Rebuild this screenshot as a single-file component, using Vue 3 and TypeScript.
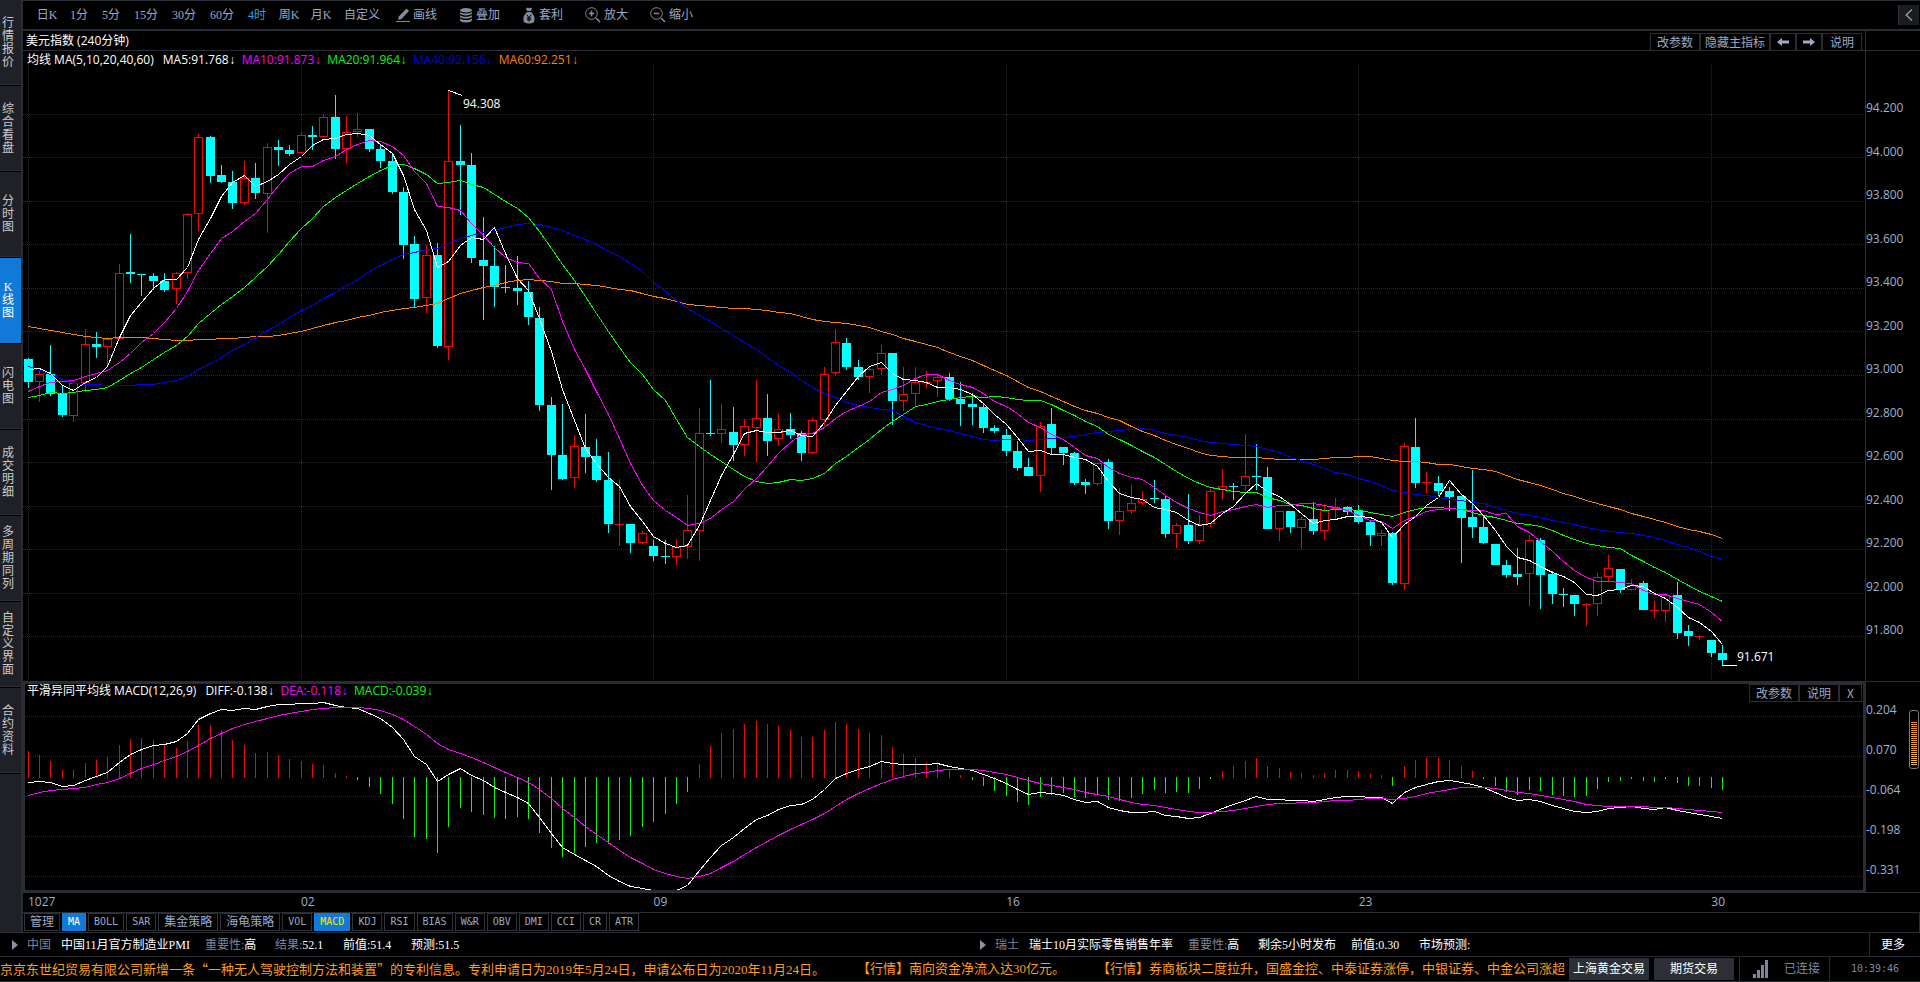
<script setup lang="ts">
type Candle = [kind: 0 | 1, high: number, top: number, bottom: number, low: number]
interface Point { x: number; y: number }

const sideTabs = ['行情报价', '综合看盘', '分时图', 'K线图', '闪电图', '成交明细', '多周期同列', '自定义界面', '合约资料']
const activeSide = 'K线图'

const periods = ['日K', '1分', '5分', '15分', '30分', '60分', '4时', '周K', '月K', '自定义']
const activePeriod = '4时'

const averages = [
  { label: 'MA5:91.768', tone: 'white' },
  { label: 'MA10:91.873', tone: 'magenta' },
  { label: 'MA20:91.964', tone: 'green' },
  { label: 'MA40:92.156', tone: 'blue' },
  { label: 'MA60:92.251', tone: 'orange' },
]

const priceLabels = ['94.200', '94.000', '93.800', '93.600', '93.400', '93.200', '93.000', '92.800', '92.600', '92.400', '92.200', '92.000', '91.800']
const macdLabels = ['0.204', '0.070', '-0.064', '-0.198', '-0.331']

const dates = [
  { label: '1027', bars: 24 },
  { label: '02', bars: 31 },
  { label: '09', bars: 31 },
  { label: '16', bars: 31 },
  { label: '23', bars: 31 },
  { label: '30', bars: 18 },
]

const indicators = ['管理', 'MA', 'BOLL', 'SAR', '集金策略', '海龟策略', 'VOL', 'MACD', 'KDJ', 'RSI', 'BIAS', 'W&R', 'OBV', 'DMI', 'CCI', 'CR', 'ATR']

// Each candle: rising flag, then high, body top, body bottom and low on the plot's vertical scale.
const candles: Candle[] = [
  [0, 358, 359, 382, 388], [1, 371, 374, 382, 402], [0, 345, 374, 394, 396], [0, 386, 393, 415, 417], [1, 382, 383, 416, 422],
  [1, 329, 344, 383, 392], [0, 332, 344, 347, 358], [1, 337, 339, 347, 366], [1, 264, 273, 339, 339], [0, 234, 272, 274, 283],
  [0, 274, 274, 275, 296], [0, 273, 276, 281, 290], [0, 273, 281, 290, 292], [1, 272, 273, 289, 304], [1, 213, 214, 273, 279],
  [1, 134, 137, 214, 231], [0, 136, 137, 176, 183], [0, 165, 175, 182, 183], [0, 171, 182, 203, 209], [1, 161, 178, 203, 205],
  [0, 163, 178, 193, 199], [1, 143, 147, 194, 233], [0, 140, 147, 150, 166], [0, 145, 150, 154, 156], [1, 132, 135, 153, 154],
  [0, 126, 135, 137, 150], [1, 114, 117, 137, 137], [0, 95, 117, 149, 159], [1, 116, 132, 149, 163], [1, 113, 129, 132, 137],
  [0, 129, 129, 149, 152], [0, 145, 149, 161, 168], [0, 155, 161, 192, 194], [0, 187, 192, 245, 259], [0, 236, 244, 299, 307],
  [1, 245, 255, 298, 313], [0, 243, 255, 346, 348], [1, 90, 161, 347, 360], [0, 125, 161, 165, 215], [0, 153, 165, 258, 263],
  [0, 217, 260, 266, 320], [0, 246, 266, 287, 307], [0, 265, 287, 288, 293], [0, 256, 288, 291, 305], [0, 281, 292, 317, 325],
  [0, 307, 318, 405, 411], [0, 397, 405, 455, 490], [0, 404, 455, 479, 480], [1, 435, 446, 478, 488], [0, 414, 447, 457, 473],
  [0, 439, 456, 480, 482], [0, 452, 480, 524, 533], [1, 479, 524, 525, 546], [0, 524, 524, 543, 553], [1, 531, 533, 543, 544],
  [0, 540, 546, 556, 561], [0, 540, 556, 557, 564], [1, 539, 547, 557, 565], [1, 495, 530, 547, 559], [1, 408, 433, 531, 561],
  [0, 380, 433, 434, 436], [1, 404, 429, 434, 443], [0, 407, 432, 445, 461], [1, 419, 426, 445, 456], [1, 380, 418, 428, 462],
  [0, 394, 418, 441, 456], [1, 414, 429, 439, 446], [0, 413, 429, 435, 439], [0, 431, 433, 453, 461], [1, 418, 420, 453, 454],
  [1, 367, 374, 420, 426], [1, 329, 342, 373, 375], [0, 338, 343, 367, 370], [0, 360, 367, 377, 380], [1, 367, 369, 377, 393],
  [1, 345, 353, 369, 375], [0, 353, 353, 401, 425], [1, 367, 394, 401, 411], [1, 367, 382, 394, 406], [1, 371, 382, 383, 388],
  [1, 374, 377, 381, 397], [0, 373, 377, 399, 401], [0, 382, 399, 404, 426], [0, 393, 404, 407, 425], [0, 403, 407, 428, 433],
  [0, 425, 428, 431, 433], [0, 429, 435, 451, 456], [0, 441, 451, 468, 471], [0, 458, 467, 476, 476], [1, 422, 426, 476, 492],
  [0, 408, 424, 448, 454], [0, 447, 447, 453, 465], [0, 452, 453, 483, 485], [0, 479, 482, 485, 494], [1, 462, 463, 484, 486],
  [0, 459, 462, 521, 529], [1, 488, 511, 521, 535], [1, 485, 503, 511, 514], [1, 491, 499, 503, 505], [0, 480, 498, 499, 503],
  [0, 496, 499, 534, 538], [1, 523, 525, 534, 548], [0, 494, 525, 541, 544], [1, 515, 524, 541, 544], [1, 489, 491, 524, 527],
  [1, 469, 486, 490, 500], [0, 483, 486, 487, 500], [1, 434, 476, 486, 491], [0, 444, 476, 477, 490], [0, 467, 477, 529, 529],
  [1, 511, 511, 529, 541], [0, 511, 511, 527, 533], [1, 517, 519, 528, 549], [0, 502, 519, 531, 535], [1, 504, 510, 531, 539],
  [1, 498, 507, 509, 519], [0, 506, 507, 512, 515], [0, 505, 510, 522, 524], [0, 520, 522, 535, 546], [1, 530, 533, 536, 546],
  [0, 532, 533, 583, 585], [1, 443, 446, 584, 590], [0, 418, 447, 483, 488], [1, 472, 482, 483, 493], [0, 476, 483, 491, 496],
  [0, 487, 491, 497, 511], [0, 496, 496, 518, 563], [0, 470, 517, 527, 538], [0, 516, 527, 543, 544], [0, 544, 544, 565, 565],
  [0, 560, 565, 575, 578], [0, 548, 574, 577, 585], [1, 535, 540, 574, 606], [0, 538, 540, 575, 609], [0, 571, 574, 594, 604],
  [0, 588, 594, 595, 607], [0, 595, 595, 604, 616], [1, 603, 604, 605, 626], [1, 573, 577, 604, 616], [1, 555, 568, 577, 582],
  [0, 569, 569, 590, 593], [1, 579, 585, 590, 591], [0, 581, 583, 610, 610], [1, 601, 610, 611, 618], [1, 593, 595, 611, 622],
  [0, 582, 595, 633, 639], [0, 625, 631, 636, 646], [1, 635, 636, 637, 640], [0, 640, 640, 653, 657], [0, 645, 653, 660, 665],
]

const barX = (i: number): number => Math.floor(28.2 + 11.372 * i)
const closes = candles.map(([up, , top, bottom]) => (up ? top : bottom))

const bars = candles.map(([up, high, top, bottom, low], i) => ({
  up: up === 1, x: barX(i), high, top, bottom, low, height: bottom - top,
}))

// Averages for bars whose window starts before the visible range.
const lead5 = [369, 368, 373, 385]
const lead10 = [391, 386, 382, 381, 380, 376, 373, 370, 362]
const lead20 = [397, 395, 392, 393, 392, 390, 389, 387, 380, 373, 367, 359, 352, 345, 336, 323, 313, 304, 296]
const lead40 = [366, 370, 374, 379, 383, 384, 384, 385, 385, 385, 384, 384, 382, 380, 376, 369, 363, 357, 350, 344, 337, 330, 324, 317, 310, 305, 298, 292, 285, 279, 271, 265, 259, 254, 252, 249, 248, 243, 238]
const lead60 = [326, 328, 330, 332, 334, 336, 337, 338, 337, 337, 337, 338, 339, 340, 340, 339, 339, 338, 338, 337, 336, 336, 335, 333, 331, 328, 325, 322, 320, 317, 315, 312, 310, 308, 307, 305, 303, 298, 293, 290, 287, 285, 282, 280, 279, 280, 281, 283, 283, 284, 285, 287, 289, 290, 293, 296, 298, 301, 304]

function movingAverage(size: number, lead: number[]): number[] {
  return closes.map((_, i) => {
    if (i < lead.length) return lead[i]
    const slice = closes.slice(i - size + 1, i + 1)
    return slice.reduce((sum, value) => sum + value, 0) / size
  })
}

function toPoints(values: number[]): string {
  return values
    .map((value, i): Point => ({ x: barX(i) + 0.5, y: Math.round(value) + 0.5 }))
    .map(({ x, y }) => `${x},${y}`)
    .join(' ')
}

const maLines = [
  { tone: 'orange', points: toPoints(movingAverage(60, lead60)) },
  { tone: 'blue', points: toPoints(movingAverage(40, lead40)) },
  { tone: 'green', points: toPoints(movingAverage(20, lead20)) },
  { tone: 'magenta', points: toPoints(movingAverage(10, lead10)) },
  { tone: 'white', points: toPoints(movingAverage(5, lead5)) },
]

// MACD(12,26,9) over the closes, scaled to the lower plot.
const zeroY = 777
const macdScale = 1.375
let fast = 379.6
let slow = 376
let signal = 13
const diffs: number[] = []
const deas: number[] = []
closes.forEach((close, i) => {
  if (i > 0) {
    fast = (fast * 11 + close * 2) / 13
    slow = (slow * 25 + close * 2) / 27
    signal = signal * 0.8 + (fast - slow) * 0.2
  }
  diffs.push(zeroY + (fast - slow) * macdScale)
  deas.push(zeroY + signal * macdScale)
})
const diffPoints = toPoints(diffs)
const deaPoints = toPoints(deas)
const histogram = diffs.map((diff, i) => {
  const size = Math.round((diff - deas[i]) * 2)
  return { x: barX(i), y: size < 0 ? zeroY + size : zeroY, height: Math.abs(size) + 1, up: size < 0 }
})

const priceGrid = [114, 157, 201, 244, 288, 331, 375, 419, 462, 506, 549, 593, 636]
const macdGrid = [716, 756, 796, 836, 876]
const dayGrid = [0, 24, 55, 86, 117, 148].map(barX)

const news = [
  { place: '中国', title: '中国11月官方制造业PMI', facts: [{ name: '结果:', value: '52.1', dim: true }, { name: '前值:', value: '51.4' }, { name: '预测:', value: '51.5' }] },
  { place: '瑞士', title: '瑞士10月实际零售销售年率', facts: [{ name: '剩余5小时发布', value: '', wide: true }, { name: '前值:', value: '0.30' }, { name: '市场预测:', value: '' }] },
]
</script>

<template>
  <div class="app">
    <div class="workspace">
      <nav class="sidebar">
        <button v-for="tab in sideTabs" :key="tab" type="button" class="side-tab" :class="{ active: tab === activeSide }">
          <span>{{ tab }}</span>
        </button>
      </nav>

      <main class="desk">
        <header class="toolbar">
          <div class="periods">
            <button v-for="p in periods" :key="p" type="button" class="period" :class="{ active: p === activePeriod, mid: /^\d\d/.test(p), wide: p === '自定义' }">{{ p }}</button>
          </div>
          <div class="tools">
            <button type="button" class="tool">
              <svg width="14" height="15" viewBox="0 0 14 15"><path d="M10.5 0.5 13 3 5.5 11 2 12 3 8.2z" fill="currentColor" /><path d="M0 13.5H14" stroke="currentColor" /></svg>
              画线
            </button>
            <button type="button" class="tool">
              <svg width="14" height="15" viewBox="0 0 14 15" fill="currentColor">
                <ellipse cx="7" cy="2.3" rx="6" ry="2.2" />
                <path d="M1 3.8C2 6.2 12 6.2 13 3.8V5.6C12 8 2 8 1 5.6zM1 7C2 9.4 12 9.4 13 7V8.8C12 11.2 2 11.2 1 8.8zM1 10.2C2 12.6 12 12.6 13 10.2V12.2C12 15.2 2 15.2 1 12.2z" />
              </svg>
              叠加
            </button>
            <button type="button" class="tool">
              <svg width="14" height="17" viewBox="0 0 14 17">
                <path d="M4 1.2 6 .6 7 1.6 8.2.4 10 1.6 9 4H5zM5 5H9C11.5 7 13 10 12.6 13 12.3 15.6 10.5 16.5 7 16.5S1.7 15.6 1.4 13C1 10 2.5 7 5 5z" fill="currentColor" />
                <path d="M4.6 7.6 7 10.6 9.4 7.6M7 10.6V14.6M4.8 11H9.2M4.8 12.8H9.2" fill="none" stroke="#000" />
              </svg>
              套利
            </button>
            <button type="button" class="tool">
              <svg width="16" height="16" viewBox="0 0 16 16" fill="none" stroke="currentColor"><circle cx="6.5" cy="6.5" r="5.8" /><path d="M3.8 6.5H9.2M6.5 3.8V9.2M11 11l4 4" stroke-width="1.6" /></svg>
              放大
            </button>
            <button type="button" class="tool">
              <svg width="16" height="16" viewBox="0 0 16 16" fill="none" stroke="currentColor"><circle cx="6.5" cy="6.5" r="5.8" /><path d="M3.8 6.5H9.2M11 11l4 4" stroke-width="1.6" /></svg>
              缩小
            </button>
          </div>
          <button type="button" class="collapse" aria-label="收起">
            <svg width="8" height="12" viewBox="0 0 8 12" fill="none" stroke="currentColor" stroke-width="1.4"><path d="M7 .5 1.2 6 7 11.5" /></svg>
          </button>
        </header>

        <div class="title-row">
          <h1 class="title">美元指数 (240分钟)</h1>
          <div class="actions">
            <button type="button">改参数</button>
            <button type="button" class="snug">隐藏主指标</button>
            <button type="button" class="arrow" aria-label="左移"><svg width="12" height="8" viewBox="0 0 12 8" fill="currentColor"><path d="M0 4 5 0V2.5H12V5.5H5V8z" /></svg></button>
            <button type="button" class="arrow" aria-label="右移"><svg width="12" height="8" viewBox="0 0 12 8" fill="currentColor"><path d="M12 4 7 0V2.5H0V5.5H7V8z" /></svg></button>
            <button type="button" class="roomy">说明</button>
          </div>
          <div class="axis-head"></div>
        </div>

        <section class="price">
          <div class="price-plot">
            <div class="legend">
              <span class="name">均线 MA(5,10,20,40,60)</span>
              <span v-for="a in averages" :key="a.label" :class="a.tone">{{ a.label }}<i>↓</i></span>
            </div>
            <svg class="plot" viewBox="23 65 1842 616" preserveAspectRatio="none">
              <g class="grid">
                <line v-for="y in priceGrid" :key="'h' + y" x1="23" x2="1865" :y1="y + 0.5" :y2="y + 0.5" />
                <line v-for="x in dayGrid" :key="'v' + x" :x1="x + 0.5" :x2="x + 0.5" y1="65" y2="681" />
              </g>
              <g v-for="b in bars" :key="b.x" :class="b.up ? 'rise' : 'fall'">
                <rect class="wick" :x="b.x" :y="b.high" width="1" :height="b.low - b.high" />
                <rect v-if="b.up && b.height > 1" class="hollow" :x="b.x - 3.5" :y="b.top + 0.5" width="8" :height="b.height - 1" />
                <rect v-else class="wick" :x="b.x - 4" :y="b.top" width="9" :height="b.height" />
              </g>
              <polyline v-for="l in maLines" :key="l.tone" class="line" :class="l.tone" :points="l.points" />
              <path class="line white" d="M448.5 90.5 462.5 95.5M1722 665.5H1737" />
              <text x="463" y="108">94.308</text>
              <text x="1737" y="661">91.671</text>
            </svg>
          </div>
          <div class="axis price-axis"><span v-for="p in priceLabels" :key="p">{{ p }}</span></div>
        </section>

        <section class="macd">
          <div class="macd-plot">
            <div class="legend">
              <span class="name">平滑异同平均线 MACD(12,26,9)</span>
              <span class="white">DIFF:-0.138<i>↓</i></span>
              <span class="magenta">DEA:-0.118<i>↓</i></span>
              <span class="green">MACD:-0.039<i>↓</i></span>
              <div class="actions">
                <button type="button">改参数</button>
                <button type="button" class="roomy">说明</button>
                <button type="button" class="close">X</button>
              </div>
            </div>
            <svg class="plot" viewBox="25 700 1838 190" preserveAspectRatio="none">
              <g class="grid"><line v-for="y in macdGrid" :key="y" x1="25" x2="1863" :y1="y + 0.5" :y2="y + 0.5" /></g>
              <rect v-for="h in histogram" :key="h.x" :class="h.up ? 'bar-up' : 'bar-down'" :x="h.x" :y="h.y" width="1" :height="h.height" />
              <polyline class="line white" :points="diffPoints" />
              <polyline class="line magenta" :points="deaPoints" />
            </svg>
          </div>
          <div class="axis macd-axis">
            <span v-for="m in macdLabels" :key="m">{{ m }}</span>
            <div class="gauge"></div>
          </div>
        </section>

        <div class="dates"><span v-for="d in dates" :key="d.label" :style="{ flexGrow: d.bars }">{{ d.label }}</span></div>

        <div class="indicators">
          <button v-for="n in indicators" :key="n" type="button" :class="{ latin: /^[A-Z]/.test(n), on: n === 'MA', sub: n === 'MACD' }">{{ n }}</button>
        </div>
      </main>
    </div>

    <div class="news">
      <div v-for="n in news" :key="n.place" class="news-item">
        <svg width="6" height="10" viewBox="0 0 6 10"><path d="M0 0 6 5 0 10z" fill="#8a92a8" /></svg>
        <span class="place">{{ n.place }}</span>
        <a href="#" class="headline">{{ n.title }}</a>
        <span class="fact weight"><em>重要性:</em>高</span>
        <span v-for="f in n.facts" :key="f.name" class="fact" :class="{ wide: f.wide }"><em v-if="f.dim">{{ f.name }}</em><template v-else>{{ f.name }}</template>{{ f.value }}</span>
      </div>
      <a href="#" class="more">更多</a>
    </div>

    <footer class="status">
      <div class="ticker">
        <div class="track">
          <span>京京东世纪贸易有限公司新增一条<b>“</b>一种无人驾驶控制方法和装置<b>”</b>的专利信息。专利申请日为2019年5月24日，申请公布日为2020年11月24日。</span>
          <span>【行情】南向资金净流入达30亿元。</span>
          <span>【行情】券商板块二度拉升，国盛金控、中泰证券涨停，中银证券、中金公司涨超</span>
        </div>
      </div>
      <button type="button" class="trade">上海黄金交易</button>
      <button type="button" class="trade">期货交易</button>
      <div class="link">
        <svg width="16" height="18" viewBox="0 0 16 18" fill="#7c869c"><path d="M0 14h3v4H0zM4 10h3v8H4zM8 5h3v13H8zM12 0h3v18h-3z" /></svg>
        已连接
      </div>
      <time class="clock">10:39:46</time>
    </footer>
  </div>
</template>

<style>
body { background: #000; }
</style>

<style scoped>
* { box-sizing: border-box; }
.app {
  --edge: #2a2e34;
  --text: #9aa9c6;
  --song: "Liberation Serif", "Noto Sans CJK SC", serif;
  --ui: "Open Sans", "Liberation Sans", "Noto Sans CJK SC", sans-serif;
  display: flex;
  flex-direction: column;
  min-height: 100vh;
  background: #000;
  color: var(--text);
  font: 12px/16px var(--song);
  white-space: nowrap;
  overflow: hidden;
}
button { margin: 0; padding: 0; border: 0; background: none; color: inherit; font: inherit; white-space: nowrap; }
a { color: inherit; text-decoration: none; }
svg { display: block; flex: none; }

.workspace { flex: 1; display: flex; min-height: 0; }
.sidebar { flex: none; width: 23px; display: flex; flex-direction: column; background: #202126; border-right: 2px solid var(--edge); }
.side-tab { flex: none; height: 86px; padding-left: 2px; border-bottom: 1px solid #000; box-shadow: inset 0 -1px #2c2e34; display: flex; align-items: center; color: #c9cbd0; }
.side-tab span { width: 12px; white-space: normal; word-break: break-all; line-height: 13px; text-align: center; }
.side-tab.active { background: #117ad8; color: #fff; box-shadow: none; }

.desk { flex: 1; min-width: 0; display: flex; flex-direction: column; }
.toolbar { height: 31px; border-top: 1px solid var(--edge); border-bottom: 2px solid var(--edge); display: flex; align-items: center; padding: 0 1px 0 15px; }
.periods { display: flex; gap: 14px; }
.period { width: 18px; display: flex; justify-content: center; }
.period.mid { width: 24px; }
.period.wide { width: 36px; }
.period.active { color: #1fa2f2; }
.tools { display: flex; gap: 22px; margin-left: 16px; }
.tool { display: flex; align-items: center; gap: 3px; }
.tool svg { color: #858b9b; }
.collapse { margin-left: auto; width: 21px; height: 20px; display: flex; align-items: center; justify-content: center; background: #1b1c20; border-left: 1px solid #33373d; color: #8f9ab0; }

.title-row { height: 20px; display: flex; border-bottom: 1px solid var(--edge); }
.title { flex: 1; margin: 0; padding-left: 3px; font: 12px/20px var(--ui); color: #fff; }
.actions { display: flex; height: 18px; font-family: "Noto Sans CJK SC", sans-serif; color: var(--text); }
.actions button { border: 1px solid var(--edge); padding: 0 6px; line-height: 16px; display: flex; align-items: center; justify-content: center; }
.actions .snug { padding: 0 4px; }
.actions .roomy { padding: 0 7px; }
.actions .arrow { width: 26px; padding: 0; }
.actions .close { width: 23px; padding: 0; }
.title-row .actions { margin: 2px 3px 0 0; }
.axis-head { width: 55px; border-left: 1px solid var(--edge); }

.price { flex: 1 1 630px; display: flex; min-height: 0; }
.price-plot { flex: 1; min-width: 0; display: flex; flex-direction: column; }
.legend { height: 14px; padding-left: 4px; display: flex; gap: 6px; font: 12px/18px var(--ui); color: #fff; }
.legend .name { margin-right: 3px; }
.legend i { display: inline-block; width: 7px; text-align: center; font-style: normal; }
.legend .white { color: #fff; }
.legend .magenta { color: #f0f; }
.legend .green { color: #0f0; }
.legend .blue { color: #0000e0; }
.legend .orange { color: #ff8000; }
.plot { flex: 1 1 0; min-height: 0; width: 100%; shape-rendering: crispEdges; }
.plot text { fill: #fff; font: 12px var(--ui); }
.grid line { stroke: #2a2a2e; stroke-dasharray: 1 1; }
.rise .wick { fill: #f00; }
.fall .wick { fill: #0ff; }
.hollow { fill: #000; stroke: #f00; }
.line { fill: none; stroke-width: 1; }
.line.white { stroke: #fff; }
.line.magenta { stroke: #f0f; }
.line.green { stroke: #0f0; }
.line.blue { stroke: #00f; }
.line.orange { stroke: #ff8000; }
.bar-up { fill: #f00; }
.bar-down { fill: #0f0; }

.axis { position: relative; flex: none; display: flex; flex-direction: column; justify-content: space-between; font: 12px/16px var(--ui); color: #9db1d0; }
.price-axis { width: 55px; border-left: 1px solid var(--edge); padding: 49px 0 43px; }
.macd { flex: none; height: 212px; display: flex; margin-left: -1px; }
.macd-plot { flex: 1; min-width: 0; border: 3px solid var(--edge); display: flex; flex-direction: column; }
.macd-plot .legend { height: 16px; padding-left: 2px; line-height: 14px; }
.macd-plot .actions { margin: 0 1px 0 auto; font-size: 12px; }
.macd-axis { width: 54px; border-top: 1px solid var(--edge); border-bottom: 1px solid var(--edge); padding: 20px 0 14px; }
.gauge { position: absolute; top: 28px; right: 1px; width: 10px; height: 59px; border: 1px solid #7a7a7a; border-radius: 3px; }
.gauge::after { content: ""; position: absolute; inset: 10px 1px 2px; background: repeating-linear-gradient(#000 0 1px, transparent 1px 2px), linear-gradient(#f58a1c, #f9bd3c); }

.dates { height: 20px; border-bottom: 1px solid var(--edge); padding: 0 4px 0 5px; display: flex; font: 12px/18px var(--ui); color: #9db1d0; }
.dates span { flex: 0 1 0; width: 0; }
.indicators { height: 19px; padding-left: 1px; display: flex; gap: 2px; border-right: 1px solid var(--edge); }
.indicators button { height: 18px; padding: 0 5px; border: 1px solid #30343a; line-height: 16px; }
.indicators .latin { font-family: "DejaVu Sans Mono", monospace; font-size: 10px; }
.indicators .on { background: #117ad8; border-color: #117ad8; color: #fff; }
.indicators .sub { background: #117ad8; border-color: #117ad8; color: #ffe600; }

.news { height: 24px; border-top: 1px solid var(--edge); display: grid; grid-template-columns: 968fr 901fr 51px; align-items: center; color: #fff; }
.news-item { display: flex; align-items: center; padding-left: 12px; }
.place { margin-left: 9px; width: 34px; color: #7b849c; }
.headline { margin-right: 15px; }
.fact { width: 68px; }
.fact.weight { width: 70px; }
.fact.wide { width: 93px; }
.fact em { font-style: normal; color: #7b849c; }
.more { align-self: stretch; border-left: 1px solid var(--edge); padding-left: 11px; line-height: 24px; }

.status { height: 26px; border-top: 1px solid var(--edge); border-bottom: 1px solid var(--edge); display: flex; align-items: center; }
.ticker { flex: 1; min-width: 0; overflow: hidden; color: #ff9c1a; font-size: 13px; line-height: 22px; }
.track { display: flex; gap: 32px; }
.ticker b { font-weight: normal; font-family: "Noto Sans CJK SC", sans-serif; }
.trade { width: 80px; height: 22px; margin-right: 5px; background: #2c3036; color: #fff; }
.link { align-self: stretch; width: 90px; padding-left: 13px; display: flex; align-items: center; gap: 15px; border-left: 1px solid var(--edge); color: #7c8aa3; }
.clock { align-self: stretch; width: 91px; border-left: 1px solid var(--edge); text-align: center; color: #7c8aa3; font: 10px/24px "DejaVu Sans Mono", monospace; }
</style>
